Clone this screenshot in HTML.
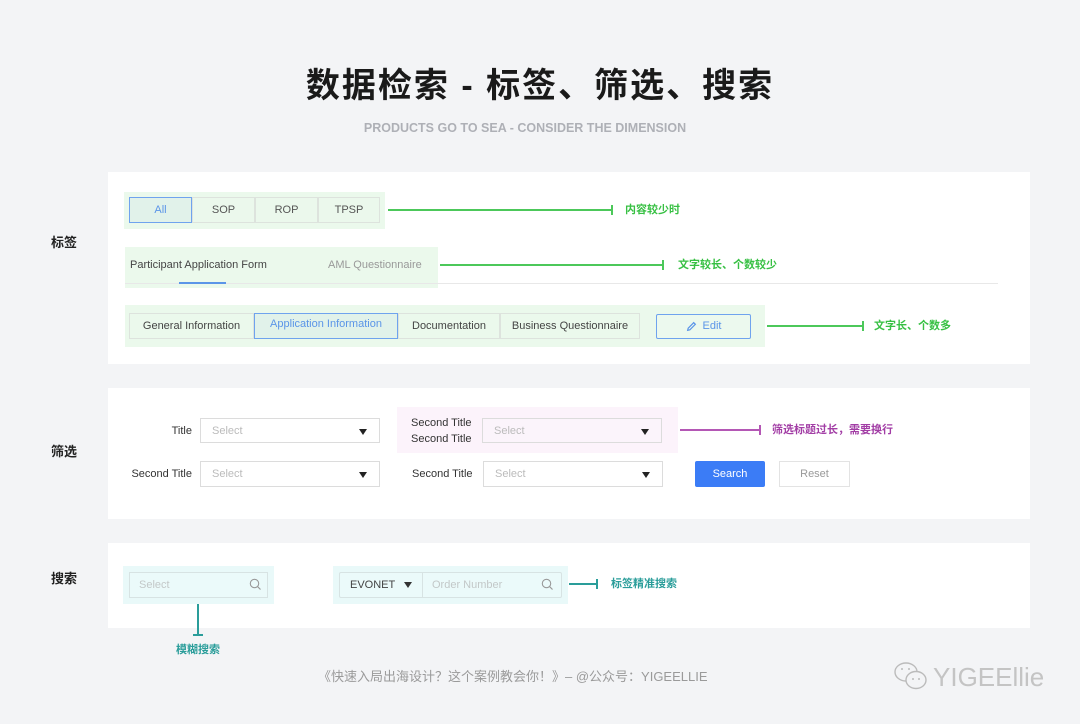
<!DOCTYPE html>
<html><head><meta charset="utf-8"><style>
*{margin:0;padding:0;box-sizing:border-box}
body{width:1080px;height:724px;background:#f3f4f6;position:relative;overflow:hidden;font-family:"Liberation Sans","Noto Sans CJK SC",sans-serif;color:#333}
.a{position:absolute}
.card{position:absolute;left:108px;width:922px;background:#fff}
.t{position:absolute;font-size:11px;white-space:nowrap;line-height:1}
.box{position:absolute;border:1px solid #dde3dd}
.c{display:flex;align-items:center;justify-content:center}
.sel{position:absolute;background:#fff;border:1px solid #dcdcdc;font-size:11px;color:#bbb;padding-left:11px;display:flex;align-items:center}
.sel:after{content:"";position:absolute;right:12px;top:10px;border-left:4.5px solid transparent;border-right:4.5px solid transparent;border-top:6px solid #222}
.lab{position:absolute;font-size:13px;font-weight:bold;color:#222}
.g{color:#37c043;font-weight:bold}
</style></head><body>
<div class="a" style="left:0;top:58px;width:1080px;text-align:center;font-size:34px;font-weight:bold;color:#1a1a1a;letter-spacing:2px">数据检索 - 标签、筛选、搜索</div>
<div class="a" style="left:-15px;top:121px;width:1080px;text-align:center;font-size:12.5px;font-weight:bold;color:#aeb0b6">PRODUCTS GO TO SEA - CONSIDER THE DIMENSION</div>

<div class="card" style="top:172px;height:192px"></div>
<div class="card" style="top:388px;height:131px"></div>
<div class="card" style="top:543px;height:85px"></div>

<div class="lab" style="left:51px;top:232px">标签</div>
<div class="lab" style="left:51px;top:441px">筛选</div>
<div class="lab" style="left:51px;top:568px">搜索</div>

<!-- row1 -->
<div class="a" style="left:124px;top:192px;width:261px;height:37px;background:#ebf9ec"></div>
<div class="box c" style="left:129px;top:197px;width:251px;height:26px;background:#ebf8ec"></div>
<div class="box c t" style="left:192px;top:197px;width:63px;height:26px;color:#555">SOP</div>
<div class="box c t" style="left:255px;top:197px;width:63px;height:26px;color:#555">ROP</div>
<div class="box c t" style="left:318px;top:197px;width:62px;height:26px;color:#555">TPSP</div>
<div class="c t" style="left:129px;top:197px;width:63px;height:26px;border:1px solid #6fa3ee;background:#e1f2ea;color:#5b95e8">All</div>
<div class="a" style="left:388px;top:209px;width:224px;height:2px;background:#4cc85a"></div>
<div class="a" style="left:611px;top:205px;width:2px;height:10px;background:#4cc85a"></div>
<div class="t g" style="left:625px;top:205px">内容较少时</div>

<!-- row2 -->
<div class="a" style="left:125px;top:247px;width:313px;height:41px;background:#ebf9ec"></div>
<div class="a" style="left:125px;top:283px;width:873px;height:1px;background:#e8e8e8"></div>
<div class="t" style="left:130px;top:260px;color:#444">Participant Application Form</div>
<div class="t" style="left:328px;top:260px;color:#999">AML Questionnaire</div>
<div class="a" style="left:179px;top:282px;width:47px;height:2px;background:#5b95e8"></div>
<div class="a" style="left:440px;top:264px;width:223px;height:2px;background:#4cc85a"></div>
<div class="a" style="left:662px;top:260px;width:2px;height:10px;background:#4cc85a"></div>
<div class="t g" style="left:678px;top:260px">文字较长、个数较少</div>

<!-- row3 -->
<div class="a" style="left:125px;top:305px;width:640px;height:42px;background:#ebf9ec"></div>
<div class="box c t" style="left:129px;top:313px;width:125px;height:26px;color:#444">General Information</div>
<div class="box c t" style="left:398px;top:313px;width:102px;height:26px;color:#444">Documentation</div>
<div class="box c t" style="left:500px;top:313px;width:140px;height:26px;color:#444">Business Questionnaire</div>
<div class="c t" style="left:254px;top:313px;width:144px;height:26px;border:1px solid #6fa3ee;background:#e1f2ea;color:#5b95e8;padding-bottom:3px">Application Information</div>
<div class="c t" style="left:656px;top:314px;width:95px;height:25px;border:1px solid #6fa3ee;border-radius:2px;background:#ecf9ee;color:#5b95e8"><svg width="11" height="11" viewBox="0 0 10 10" style="margin-right:6px"><path d="M1.5 8.5 L2 6.5 L7 1.5 L8.5 3 L3.5 8 Z" fill="none" stroke="#5b95e8" stroke-width="1.1"/></svg>Edit</div>
<div class="a" style="left:767px;top:325px;width:96px;height:2px;background:#4cc85a"></div>
<div class="a" style="left:862px;top:321px;width:2px;height:10px;background:#4cc85a"></div>
<div class="t g" style="left:874px;top:321px">文字长、个数多</div>

<!-- filter -->
<div class="t" style="left:130px;top:426px;width:62px;text-align:right;color:#333">Title</div>
<div class="sel" style="left:200px;top:418px;width:180px;height:25px">Select</div>
<div class="a" style="left:397px;top:407px;width:281px;height:46px;background:#fcf3fb"></div>
<div class="t" style="left:411px;top:418px;color:#333">Second Title</div>
<div class="t" style="left:411px;top:434px;color:#333">Second Title</div>
<div class="sel" style="left:482px;top:418px;width:180px;height:25px;background:#fbf4fb">Select</div>
<div class="a" style="left:680px;top:429px;width:80px;height:2px;background:#b457b5"></div>
<div class="a" style="left:759px;top:425px;width:2px;height:10px;background:#b457b5"></div>
<div class="t" style="left:772px;top:425px;color:#a23da5;font-weight:bold">筛选标题过长，需要换行</div>

<div class="t" style="left:120px;top:469px;width:72px;text-align:right;color:#333">Second Title</div>
<div class="sel" style="left:200px;top:461px;width:180px;height:26px">Select</div>
<div class="t" style="left:412px;top:469px;color:#333">Second Title</div>
<div class="sel" style="left:483px;top:461px;width:180px;height:26px">Select</div>
<div class="c t" style="left:695px;top:461px;width:70px;height:26px;background:#3b7cf6;color:#fff;border-radius:2px">Search</div>
<div class="c t" style="left:779px;top:461px;width:71px;height:26px;border:1px solid #e3e3e3;color:#999">Reset</div>

<!-- search -->
<div class="a" style="left:123px;top:566px;width:151px;height:38px;background:#e9f9f9"></div>
<div class="a" style="left:129px;top:572px;width:139px;height:26px;border:1px solid #d7e3e3;background:#ebfafa"></div>
<div class="t" style="left:139px;top:580px;color:#c3c8c8">Select</div>
<svg class="a" style="left:249px;top:578px" width="13" height="13" viewBox="0 0 13 13"><circle cx="5.5" cy="5.5" r="4.2" fill="none" stroke="#999" stroke-width="1.1"/><path d="M8.5 8.5 L11.5 11.5" stroke="#999" stroke-width="1.2"/></svg>
<div class="a" style="left:197px;top:604px;width:2px;height:31px;background:#2a9d9a"></div>
<div class="a" style="left:193px;top:634px;width:10px;height:2px;background:#2a9d9a"></div>
<div class="t" style="left:176px;top:645px;color:#2a9d9a;font-weight:bold">模糊搜索</div>

<div class="a" style="left:333px;top:566px;width:235px;height:38px;background:#e9f9f9"></div>
<div class="a" style="left:339px;top:572px;width:223px;height:26px;border:1px solid #d7e3e3;border-radius:2px;background:#ebfafa"></div>
<div class="a" style="left:422px;top:572px;width:1px;height:26px;background:#d7e3e3"></div>
<div class="t" style="left:350px;top:580px;color:#444">EVONET</div>
<div class="a" style="left:404px;top:582px;border-left:4.5px solid transparent;border-right:4.5px solid transparent;border-top:6px solid #333"></div>
<div class="t" style="left:432px;top:580px;color:#c3c8c8">Order Number</div>
<svg class="a" style="left:541px;top:578px" width="13" height="13" viewBox="0 0 13 13"><circle cx="5.5" cy="5.5" r="4.2" fill="none" stroke="#999" stroke-width="1.1"/><path d="M8.5 8.5 L11.5 11.5" stroke="#999" stroke-width="1.2"/></svg>
<div class="a" style="left:569px;top:583px;width:28px;height:2px;background:#2a9d9a"></div>
<div class="a" style="left:596px;top:579px;width:2px;height:10px;background:#2a9d9a"></div>
<div class="t" style="left:611px;top:579px;color:#2a9d9a;font-weight:bold">标签精准搜索</div>

<!-- footer -->
<div class="t" style="left:318px;top:670px;font-size:13px;color:#9a9a9a">《快速入局出海设计？这个案例教会你！》– @公众号：YIGEELLIE</div>
<svg class="a" style="left:893px;top:661px" width="40" height="32" viewBox="0 0 40 32"><ellipse cx="13" cy="11" rx="11" ry="9" fill="#f3f4f6" stroke="#bbb" stroke-width="1.4"/><ellipse cx="23" cy="19" rx="10" ry="8.5" fill="#f3f4f6" stroke="#bbb" stroke-width="1.4"/><circle cx="20" cy="18" r="1" fill="#bbb"/><circle cx="26" cy="18" r="1" fill="#bbb"/><circle cx="9" cy="8" r="1" fill="#bbb"/><circle cx="16" cy="8" r="1" fill="#bbb"/></svg>
<div class="t" style="left:933px;top:664px;font-size:26px;color:#c4c4c4">YIGEEllie</div>
</body></html>
